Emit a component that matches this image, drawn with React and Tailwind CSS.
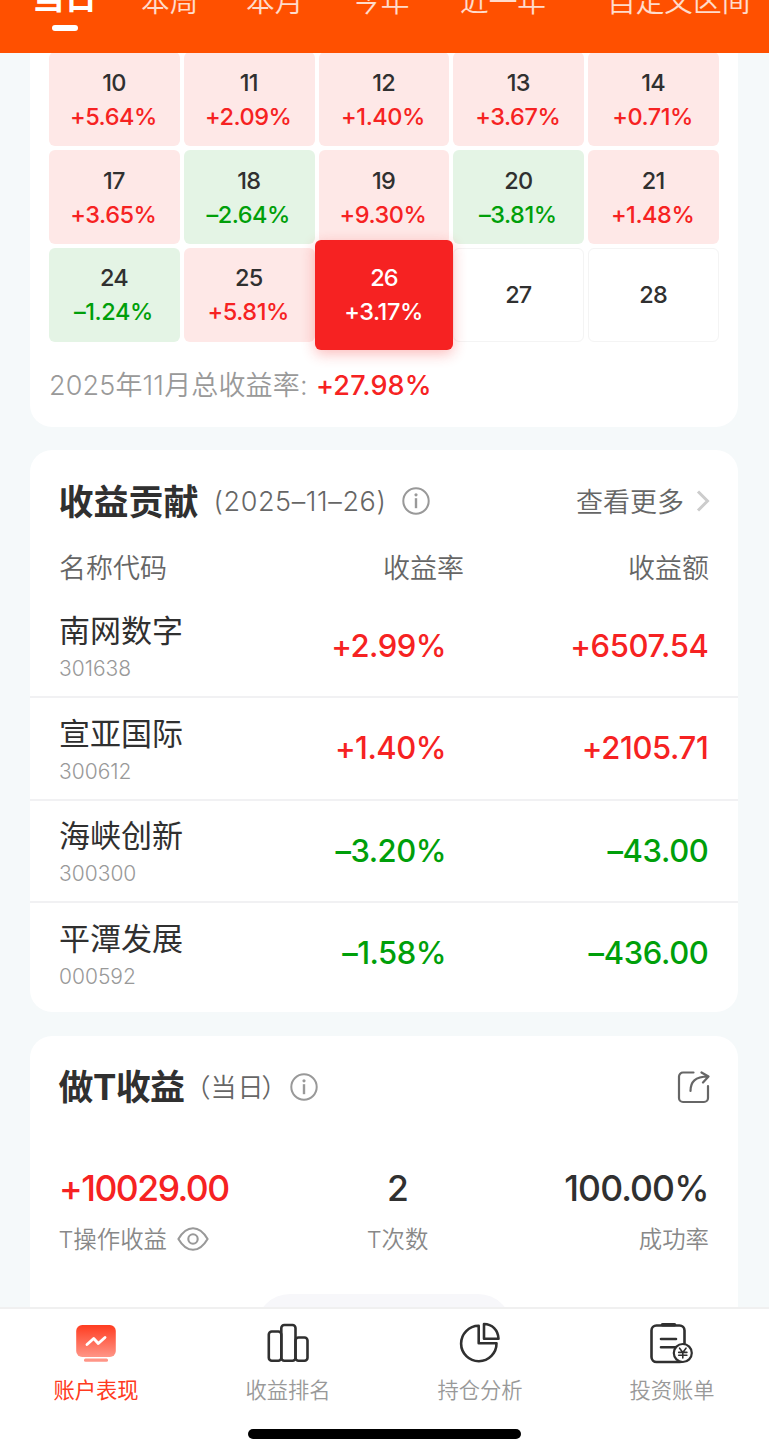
import React from "react";

const RED = "text-[#f62222]";
const GREEN = "text-[#009f0a]";
const tone = (v) => (v.startsWith("+") ? RED : GREEN);

const tabs = [
  ["本周", "ml-[45px] w-[58px]"],
  ["本月", "ml-[47px] w-[58px]"],
  ["今年", "ml-[48px] w-[58px]"],
  ["近一年", "ml-[50px] w-[88px]"],
  ["自定义区间", "ml-[59px] w-[150px]"],
];

const days = [
  ["10", "+5.64%"], ["11", "+2.09%"], ["12", "+1.40%"], ["13", "+3.67%"], ["14", "+0.71%"],
  ["17", "+3.65%"], ["18", "–2.64%"], ["19", "+9.30%"], ["20", "–3.81%"], ["21", "+1.48%"],
  ["24", "–1.24%"], ["25", "+5.81%"], ["26", "+3.17%", true], ["27"], ["28"],
];

const stocks = [
  ["南网数字", "301638", "+2.99%", "+6507.54"],
  ["宣亚国际", "300612", "+1.40%", "+2105.71"],
  ["海峡创新", "300300", "–3.20%", "–43.00"],
  ["平潭发展", "000592", "–1.58%", "–436.00"],
];

function Day({ date, value, active }) {
  const text = "flex flex-col items-center justify-center pt-px text-[23.5px] leading-[34px] font-medium";
  if (active) {
    return (
      <div className="relative">
        <div className={`${text} absolute -inset-x-1 -inset-y-2 z-10 rounded-[6px] bg-[#f62222] text-white shadow-[0_4px_14px_rgba(246,34,34,0.3)]`}>
          <span className="tracking-[-0.8px]">{date}</span>
          <span className="-ml-px tracking-[-0.45px]">{value}</span>
        </div>
      </div>
    );
  }
  const bg = !value ? "border border-[#f4f4f4] bg-white" : value.startsWith("+") ? "bg-[#fee8e7]" : "bg-[#e4f4e5]";
  return (
    <div className={`${text} rounded-[6px] ${bg}`}>
      <span className="-ml-px tracking-[-0.8px] text-[#303030]">{date}</span>
      {value && <span className={`-ml-[2px] tracking-[-0.45px] ${tone(value)}`}>{value}</span>}
    </div>
  );
}

function Info({ className }) {
  return (
    <svg className={className} width="28" height="28" viewBox="0 0 28 28" fill="none" stroke="#999" strokeWidth="2">
      <circle cx="14" cy="14" r="12.7" />
      <path d="M14 11.2v10" strokeWidth="2.4" />
      <circle cx="14" cy="7.8" r="1.6" fill="#999" stroke="none" />
    </svg>
  );
}

function Calendar() {
  return (
    <section className="ml-[29.5px] mr-[31px] -mt-px h-[375px] rounded-b-[22px] bg-white pl-[19.5px] pr-[19px]">
      <div className="grid h-[289.500px] grid-cols-5 grid-rows-3 gap-[4px]">
        {days.map(([date, value, active]) => (
          <Day key={date} date={date} value={value} active={active} />
        ))}
      </div>
      <div className="mt-[24px] flex h-10 items-center text-[27px] leading-10">
        <span className="w-[267px] whitespace-nowrap font-[350] tracking-[0.15px] text-[#999]">2025年11月总收益率:</span>
        <span className={`font-medium tracking-[0.15px] ${RED}`}>+27.98%</span>
      </div>
    </section>
  );
}

function Contribution() {
  return (
    <section className="ml-[29.5px] mr-[31px] mt-[23px] h-[562px] rounded-[22px] bg-white pt-[28px]">
      <div className="flex h-[46px] items-center pl-[29px] pr-[28px] text-[27px] text-[#666]">
        <h2 className="w-[155px] pt-[2px] text-[35px] font-bold text-[#303030]">收益贡献</h2>
        <span className="whitespace-nowrap pt-[2px] font-[350] tracking-[0.600px]">(2025–11–26)</span>
        <Info className="ml-[16px]" />
        <span className="ml-auto pt-[3px] font-[350]">查看更多</span>
        <svg className="ml-[12px]" width="14" height="24" viewBox="0 0 14 24" fill="none" stroke="#ccc" strokeWidth="3">
          <path d="M2 2.5 11.5 12 2 21.5" />
        </svg>
      </div>
      <div className="mt-[25px] flex h-10 items-center pl-[29.500px] pr-[29px] text-[27px] font-[350] leading-10 text-[#666]">
        <span className="w-[200px]">名称代码</span>
        <span className="w-[205px] text-right">收益率</span>
        <span className="flex-1 text-right">收益额</span>
      </div>
      <div className="mt-[6px]">
        {stocks.map(([name, code, rate, amount]) => (
          <div key={code} className="flex h-[102.6px] items-center border-b-2 border-[#f1f1f3] px-[29.500px] last:border-b-0 last:pb-[2px]">
            <div className="w-[200px] pt-[4px]">
              <div className="h-[37px] text-[31px] leading-[37px] text-[#303030]">{name}</div>
              <div className="h-[34px] pt-[2px] text-[21px] font-[350] leading-[36px] text-[#999]">{code}</div>
            </div>
            <div className={`w-[187px] text-right text-[31px] font-medium leading-[40px] tracking-[-0.500px] ${tone(rate)}`}>{rate}</div>
            <div className={`flex-1 text-right text-[31px] font-medium leading-[40px] tracking-[-0.350px] ${tone(amount)}`}>{amount}</div>
          </div>
        ))}
      </div>
    </section>
  );
}

function Trades() {
  return (
    <section className="ml-[29.5px] mr-[31px] mt-[24px] h-[400px] rounded-t-[22px] bg-white pt-[28px]">
      <div className="flex h-[46px] items-center pl-[29px] pr-[28px] text-[#666]">
        <h2 className="w-[126px] whitespace-nowrap text-[35px] font-bold tracking-[-0.600px] text-[#303030]">做T收益</h2>
        <span className="flex w-[109px] whitespace-nowrap pt-px text-[26px] font-[350]">
          <span>（</span>
          <span className="tracking-[1px]">当日</span>
          <span className="-ml-[3px]">）</span>
        </span>
        <Info className="ml-[-4px]" />
        <svg className="ml-auto" width="33" height="34" viewBox="0 0 33 34" fill="none" stroke="#666" strokeWidth="2.2" strokeLinecap="round" strokeLinejoin="round">
          <path d="M16.5 2.5H6a4 4 0 0 0-4 4V28a4 4 0 0 0 4 4h21a4 4 0 0 0 4-4V16" />
          <path d="M13.5 21C13.5 12 18 6.5 31 6.5M24.500 2.500l7 4-5.500 6" />
        </svg>
      </div>
      <div className="mt-[54px] flex px-[29.500px] text-[35.500px] font-medium leading-[49px] text-[#303030]">
        <span className={`w-[270px] tracking-[-1.500px] ${RED}`}>+10029.00</span>
        <span className="w-[138px] text-center">2</span>
        <span className="flex-1 text-right tracking-[-0.900px]">100.00%</span>
      </div>
      <div className="mt-[11px] flex h-[30px] pl-[29px] pr-[29px] text-[23.4px] font-[350] leading-[31px] text-[#888]">
        <span className="flex w-[270px] items-center whitespace-nowrap">
          T操作收益
          <svg className="ml-[10px]" width="32" height="24" viewBox="0 0 32 24" fill="none" stroke="#999" strokeWidth="2.1" strokeLinejoin="round">
            <path d="M1.4 12C5.5 5 10 1.2 16 1.2S26.500 5 30.600 12C26.500 19 22 22.800 16 22.800S5.500 19 1.400 12Z" />
            <circle cx="16" cy="12" r="4.700" />
          </svg>
        </span>
        <span className="w-[138px] text-center">T次数</span>
        <span className="flex-1 text-right">成功率</span>
      </div>
      <div className="mx-auto mt-[40px] h-[68px] w-[256px] rounded-full bg-[#f7f7fa]" />
    </section>
  );
}

function PerformanceIcon() {
  return (
    <svg width="48" height="44" viewBox="0 0 48 44" fill="none">
      <defs>
        <linearGradient id="screen" x1="0" y1="0" x2="0" y2="1">
          <stop stopColor="#ff3c20" />
          <stop offset="1" stopColor="#ff9587" />
        </linearGradient>
      </defs>
      <rect x="4.200" y="4" width="39.600" height="32" rx="6" fill="url(#screen)" />
      <rect x="12" y="37.400" width="24" height="3.400" rx="1.500" fill="#ff9587" />
      <path d="m15 23.500 6.700-6 4.600 5 6.700-6" stroke="#fff" strokeWidth="2.900" strokeLinecap="round" strokeLinejoin="round" />
    </svg>
  );
}

function RankingIcon() {
  return (
    <svg width="48" height="44" viewBox="0 0 48 44" fill="none" stroke="#303030" strokeWidth="2.600">
      <rect x="4.800" y="10.500" width="12.500" height="29.200" rx="3" />
      <rect x="17.300" y="4" width="14.200" height="35.700" rx="3" />
      <rect x="31.500" y="16.500" width="12" height="23.200" rx="3" />
    </svg>
  );
}

function PieIcon() {
  return (
    <svg width="48" height="44" viewBox="0 0 48 44" fill="none" stroke="#303030" strokeWidth="2.600" strokeLinejoin="round">
      <path d="M22.700 4.800V22.300H40.500A17.700 17.700 0 1 1 22.700 4.800Z" />
      <path d="M28 3C36 3.100 42.200 8.900 42.500 17.800H28Z" />
    </svg>
  );
}

function BillIcon() {
  return (
    <svg width="48" height="44" viewBox="0 0 48 44" fill="none" stroke="#303030" strokeWidth="2.600" strokeLinecap="round" strokeLinejoin="round">
      <rect x="3.500" y="4.500" width="33" height="36.500" rx="5" />
      <path d="M14.500 3.700h12" strokeWidth="3.600" />
      <path d="M13 18h15M13 26.200h14.500" />
      <circle cx="34.800" cy="32" r="9" fill="#fff" strokeWidth="2.200" />
      <path d="m31.600 27.200 3.200 4.200 3.200-4.200M34.800 31.400v5.500M30.700 31.400h8.200M30.700 34.300h8.200" strokeWidth="1.600" />
    </svg>
  );
}

const nav = [
  ["账户表现", PerformanceIcon],
  ["收益排名", RankingIcon],
  ["持仓分析", PieIcon],
  ["投资账单", BillIcon],
];

export default function App() {
  return (
    <div className="flex h-[1455px] w-[769px] flex-col overflow-hidden bg-[#f5f9fa] font-['Inter','Noto_Sans_CJK_SC',sans-serif]">
      <header className="h-[53.400px] shrink-0 overflow-hidden bg-[#ff5000]">
        <div className="-mt-[18px] flex h-[40px] items-center whitespace-nowrap pl-[32px] text-[28.700px] font-[350] leading-[40px] text-white/80">
          <span className="w-[64px] pb-[8px] text-[32.500px] font-bold text-white">当日</span>
          {tabs.map(([label, cls]) => (
            <span key={label} className={`shrink-0 ${cls}`}>{label}</span>
          ))}
        </div>
        <div className="ml-[52px] mt-[3px] h-[6px] w-[26px] rounded-full bg-white" />
      </header>
      <main className="min-h-0 flex-1 overflow-hidden">
        <Calendar />
        <Contribution />
        <Trades />
      </main>
      <nav className="h-[148px] shrink-0 border-t-2 border-[#f0f0f0] bg-white">
        <div className="grid grid-cols-4 pr-px pt-[12px]">
          {nav.map(([label, Icon], i) => (
            <div key={label} className="flex flex-col items-center">
              <Icon />
              <span className={`mt-[10px] text-[21.300px] leading-[30px] ${i === 0 ? "text-[#ff3a20]" : "font-[350] text-[#999]"}`}>{label}</span>
            </div>
          ))}
        </div>
        <div className="mx-auto mt-[24px] h-[10px] w-[273px] rounded-full bg-black" />
      </nav>
    </div>
  );
}
